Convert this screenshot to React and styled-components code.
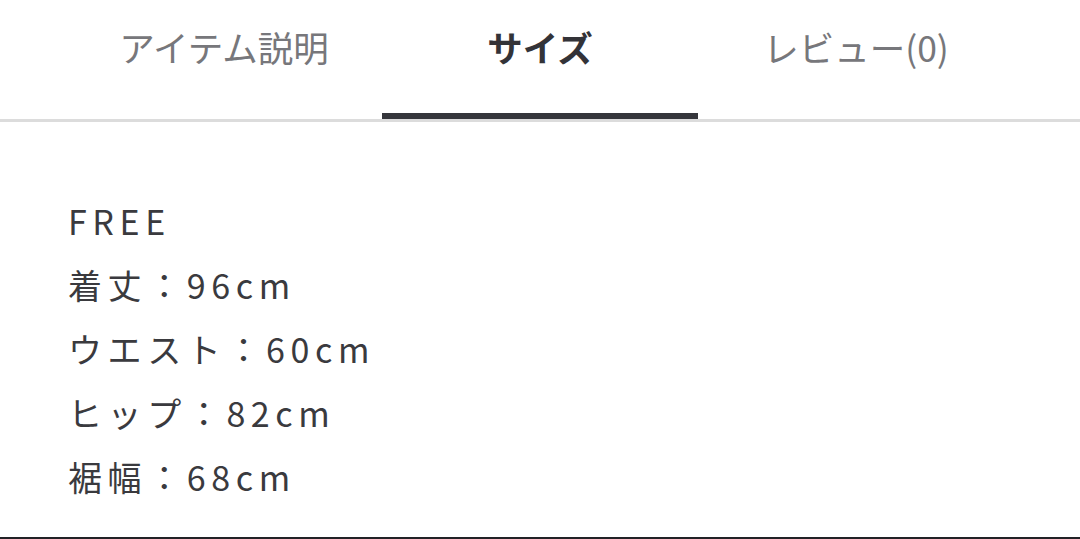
import styled, { createGlobalStyle } from 'styled-components';

const GlobalStyle = createGlobalStyle`
  html, body {
    margin: 0;
    padding: 0;
    background: #ffffff;
  }
  body {
    font-family: 'Noto Sans CJK JP', 'Noto Sans', sans-serif;
  }
`;

const tabs = ['アイテム説明', 'サイズ', 'レビュー(0)'];
const sizes = ['FREE', '着丈：96cm', 'ウエスト：60cm', 'ヒップ：82cm', '裾幅：68cm'];

export default function App() {
  return (
    <Page>
      <GlobalStyle />
      <TabBar>
        {tabs.map((label, i) => (
          <Tab key={label} $active={i === 1}>
            {label}
          </Tab>
        ))}
      </TabBar>
      <SizeList>
        {sizes.map((line) => (
          <SizeLine key={line}>{line}</SizeLine>
        ))}
      </SizeList>
    </Page>
  );
}

const Page = styled.div`
  width: 1080px;
  height: 539px;
  box-sizing: border-box;
  border-bottom: 2px solid #222226;
  overflow: hidden;
`;

const TabBar = styled.div`
  height: 122px;
  box-sizing: border-box;
  padding: 0 66px;
  display: grid;
  grid-template-columns: repeat(3, 1fr);
  border-bottom: 3px solid #dcdcdc;
`;

const Tab = styled.div`
  position: relative;
  padding-top: 22px;
  line-height: 50px;
  font-size: 35.5px;
  text-align: center;
  color: ${(p) => (p.$active ? '#333338' : '#77777b')};
  font-weight: ${(p) => (p.$active ? 700 : 400)};
  cursor: pointer;

  &::after {
    content: '';
    display: ${(p) => (p.$active ? 'block' : 'none')};
    position: absolute;
    left: 0;
    right: 0;
    bottom: 0;
    height: 6px;
    background: #35363b;
  }
`;

const SizeList = styled.div`
  padding: 67px 0 0 68px;
`;

const SizeLine = styled.div`
  font-size: 34px;
  line-height: 64px;
  letter-spacing: 5.6px;
  color: #3a3a3e;
`;
